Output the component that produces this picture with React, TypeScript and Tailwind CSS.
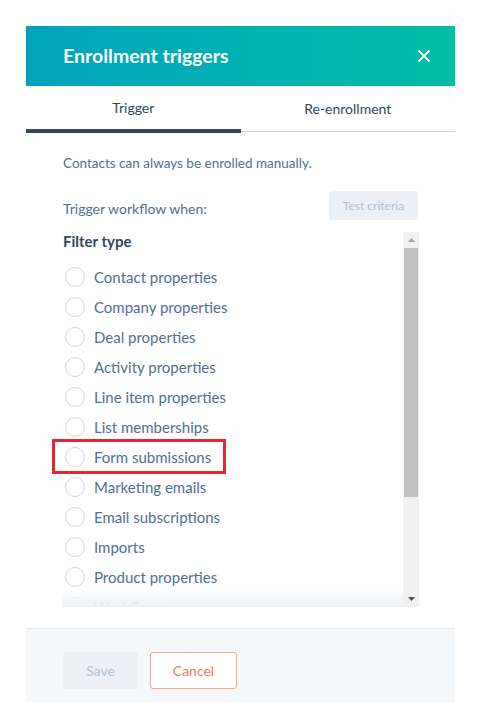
import { X } from "lucide-react"

export default function App() {
  const filters = [
    "Contact properties",
    "Company properties",
    "Deal properties",
    "Activity properties",
    "Line item properties",
    "List memberships",
    "Form submissions",
    "Marketing emails",
    "Email subscriptions",
    "Imports",
    "Product properties",
    "Workflows",
  ]

  return (
    <div className="min-h-[720px] bg-white pt-[26px] pl-[26px]" style={{ fontFamily: "Lato, 'Open Sans', sans-serif" }}>
      <div className="w-[429px] bg-white">
        {/* header */}
        <div className="flex h-[60px] items-center justify-between bg-gradient-to-r from-[#00a4bd] to-[#00bda5] pl-[37px] pr-[21px]">
          <h1 className="text-[19.5px] font-bold text-white">Enrollment triggers</h1>
          <X className="h-[20px] w-[20px] text-white" strokeWidth={2.2} />
        </div>

        {/* tabs */}
        <div className="flex h-[47px]">
          <div className="flex flex-1 items-center justify-center border-b-4 border-[#33475b] text-[14px] text-[#33475b]">
            Trigger
          </div>
          <div className="mb-[1px] flex flex-1 items-center justify-center border-b border-[#cbd6e2] text-[14px] text-[#33475b]">
            Re-enrollment
          </div>
        </div>

        {/* body */}
        <div className="px-[37px] pt-[21px]">
          <p className="text-[13.5px] leading-[18px] text-[#516f90]">Contacts can always be enrolled manually.</p>
          <div className="mt-[19px] flex items-center justify-between">
            <span className="pt-[6px] text-[14px] text-[#516f90]">Trigger workflow when:</span>
            <button className="h-[29px] w-[89px] rounded-[3px] bg-[#eaf0f6] text-[12px] text-[#b0c1d4]">Test criteria</button>
          </div>

          <div className="relative -ml-[1px] mt-[12px] flex h-[375px] w-[357px]">
            <div className="relative flex-1 overflow-x-visible overflow-y-clip">
              <div className="pl-[1px] pt-[1px] text-[15px] font-bold leading-[16px] text-[#33475b]">Filter type</div>
              <div className="mt-[13px]">
                {filters.map((f) => (
                  <div key={f} className="relative flex h-[30px] items-center pl-[3px]">
                    <span className="h-[20px] w-[20px] rounded-full border-[1.5px] border-[#cbd6e2] bg-white" />
                    <span className="ml-[9px] text-[15px] text-[#516f90]">{f}</span>
                    {f === "Form submissions" && (
                      <span className="absolute -left-[10px] -top-[3px] h-[35px] w-[174px] border-[3px] border-[#e3262f]" />
                    )}
                  </div>
                ))}
              </div>
              <div className="pointer-events-none absolute bottom-0 left-0 right-0 h-[18px] bg-gradient-to-b from-white/60 to-[#eef2f5]" />
            </div>
            {/* scrollbar */}
            <div className="flex w-[16px] flex-col bg-[#f1f1f1]">
              <div className="flex h-[16px] items-center justify-center">
                <svg width="7" height="4" viewBox="0 0 7 4"><path d="M0 4 L3.5 0 L7 4 Z" fill="#a3a3a3" /></svg>
              </div>
              <div className="mx-[1px] h-[249px] bg-[#c1c1c1]" />
              <div className="flex-1" />
              <div className="flex h-[16px] items-center justify-center">
                <svg width="7" height="4" viewBox="0 0 7 4"><path d="M0 0 L7 0 L3.5 4 Z" fill="#505050" /></svg>
              </div>
            </div>
          </div>
        </div>

        {/* footer */}
        <div className="mt-[21px] flex h-[74px] gap-[12px] border-t border-[#e5eaf0] bg-[#f5f8fa] px-[37px] pt-[23px]">
          <button className="h-[37px] w-[75px] rounded-[3px] bg-[#eaf0f6] text-[14px] text-[#b0c1d4]">Save</button>
          <button className="h-[37px] w-[87px] rounded-[3px] border border-[#f4a68f] bg-white text-[14px] text-[#f0785a]">Cancel</button>
        </div>
      </div>
    </div>
  )
}
